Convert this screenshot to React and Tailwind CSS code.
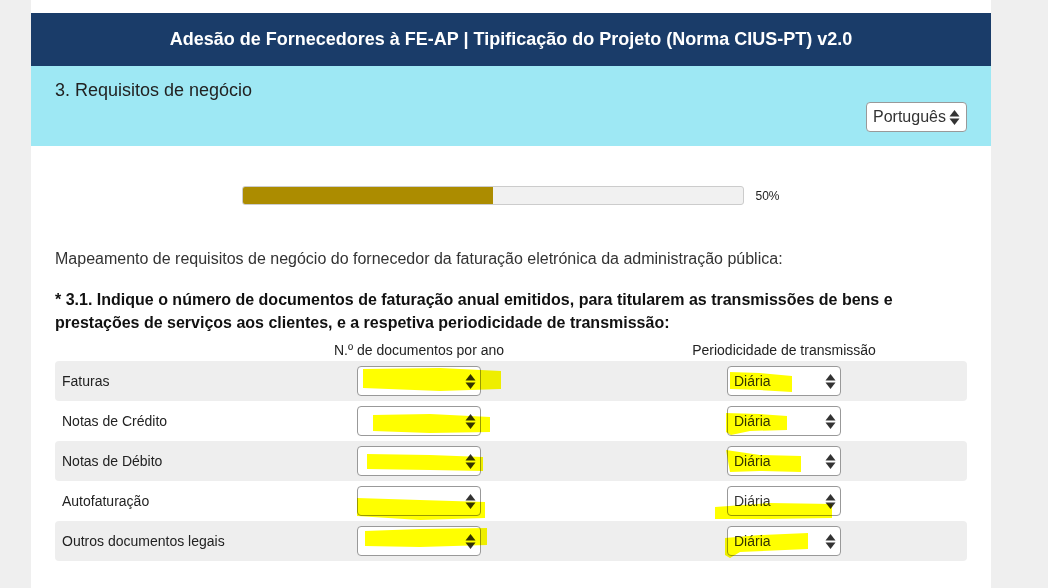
import React from "react";

const Arrows = () => (
  <svg width="11" height="17" viewBox="0 0 11 17" className="shrink-0">
    <polygon points="5.5,1 10.5,7.5 0.5,7.5" fill="#333" />
    <polygon points="0.5,9.5 10.5,9.5 5.5,16" fill="#333" />
  </svg>
);

const Select = ({ w, value }) => (
  <div
    className="flex items-center justify-between h-[30px] rounded-[4px] border border-[#999] bg-white pl-[6px] pr-[4px] text-[14px] text-[#333]"
    style={{ width: w }}
  >
    <span>{value}</span>
    <Arrows />
  </div>
);

const rows = [
  "Faturas",
  "Notas de Crédito",
  "Notas de Débito",
  "Autofaturação",
  "Outros documentos legais",
];

const highlights = [
  "363,369 440,368 501,371 501,389 440,391 363,388",
  "730,372 760,373 792,376 792,392 760,390 730,389",
  "373,415 430,414 490,417 490,432 430,433 373,431",
  "726,413 760,414 787,416 787,430 750,431 731,435 726,432",
  "367,454 430,455 483,457 483,471 430,470 367,469",
  "726,450 760,455 801,456 801,472 760,471 730,472",
  "357,498 420,500 485,502 485,518 420,520 357,516",
  "715,507 770,503 832,504 832,518 770,519 715,519",
  "365,531 420,529 487,528 487,545 420,547 365,546",
  "725,538 760,535 808,533 808,549 740,552 730,558 725,555",
];

export default function App() {
  return (
    <div
      className="relative w-[1048px] h-[588px] overflow-hidden bg-[#efefef]"
      style={{ fontFamily: '"Liberation Sans", Arial, sans-serif' }}
    >
      <div className="ml-[31px] w-[960px] h-full bg-white pt-[13px]">
        <div className="h-[53px] bg-[#1a3c69] flex items-center justify-center text-white font-bold text-[18px]">
          Adesão de Fornecedores à FE-AP | Tipificação do Projeto (Norma CIUS-PT) v2.0
        </div>
        <div className="h-[80px] bg-[#9ee8f4] px-[24px] pt-[14px] flex flex-col">
          <div className="text-[18px] text-[#222] leading-[21px]">3. Requisitos de negócio</div>
          <div className="flex justify-end mt-[1px]">
            <div className="flex items-center h-[30px] w-[101px] rounded-[4px] border border-[#999] bg-white pl-[6px] pr-[4px] gap-[3px] text-[16px] text-[#333]">
              <span>Português</span>
              <Arrows />
            </div>
          </div>
        </div>
        <div className="flex items-center justify-center gap-[11px] mt-[40px] h-[19px]">
          <div className="relative w-[502px] h-[19px] rounded-[3px] border border-[#ccc] bg-[#f1f1f1] overflow-hidden">
            <div className="absolute left-0 top-0 bottom-0 w-1/2 bg-[#ac8c00]" />
          </div>
          <span className="text-[12px] text-[#222]">50%</span>
        </div>
        <div className="px-[24px]">
          <div className="mt-[43px] text-[16px] text-[#333] leading-[22px]">
            Mapeamento de requisitos de negócio do fornecedor da faturação eletrónica da administração pública:
          </div>
          <div className="mt-[18px] text-[16px] font-bold text-[#111] leading-[23px]">
            * 3.1. Indique o número de documentos de faturação anual emitidos, para titularem as transmissões de bens e prestações de serviços aos clientes, e a respetiva periodicidade de transmissão:
          </div>
          <div className="grid grid-cols-[264px_200px_165px_200px_83px] mt-[8px] text-[14px] text-[#222] h-[16px] leading-[16px]">
            <div />
            <div className="text-center whitespace-nowrap">N.º de documentos por ano</div>
            <div />
            <div className="text-center whitespace-nowrap">Periodicidade de transmissão</div>
            <div />
          </div>
          <div className="mt-[3px]">
            {rows.map((r, i) => (
              <div
                key={r}
                className={`grid grid-cols-[264px_200px_165px_200px_83px] h-[40px] items-center rounded-[4px] ${
                  i % 2 === 0 ? "bg-[#eeeeee]" : "bg-white"
                }`}
              >
                <div className="pl-[7px] text-[14px] text-[#222]">{r}</div>
                <div className="flex justify-center">
                  <Select w={124} value="" />
                </div>
                <div />
                <div className="flex justify-center">
                  <Select w={114} value="Diária" />
                </div>
                <div />
              </div>
            ))}
          </div>
        </div>
      </div>
      <svg
        className="absolute inset-0 pointer-events-none mix-blend-multiply"
        width="1048"
        height="588"
      >
        {highlights.map((p, i) => (
          <polygon key={i} points={p} fill="#ffff00" />
        ))}
      </svg>
    </div>
  );
}
